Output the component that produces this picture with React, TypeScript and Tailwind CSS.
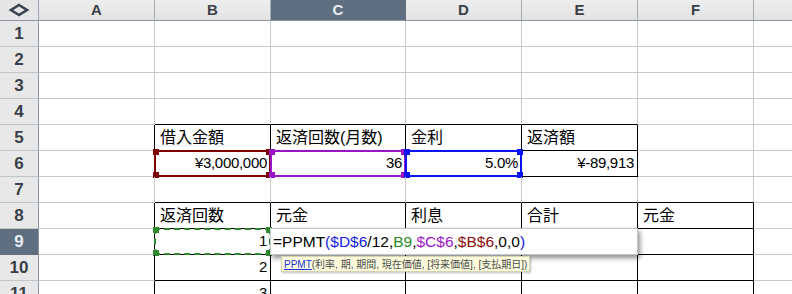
import React from "react";

const cols = ["A", "B", "C", "D", "E", "F", "G"];
const rows = [1, 2, 3, 4, 5, 6, 7, 8, 9, 10, 11];

type Cell = { text: string; num?: boolean };

const data: Record<string, Cell> = {
    B5: { text: "借入金額" },
    C5: { text: "返済回数(月数)" },
    D5: { text: "金利" },
    E5: { text: "返済額" },
    B6: { text: "¥3,000,000", num: true },
    C6: { text: "36", num: true },
    D6: { text: "5.0%", num: true },
    E6: { text: "¥-89,913", num: true },
    B8: { text: "返済回数" },
    C8: { text: "元金" },
    D8: { text: "利息" },
    E8: { text: "合計" },
    F8: { text: "元金" },
    B9: { text: "1", num: true },
    B10: { text: "2", num: true },
    B11: { text: "3", num: true },
};

// range highlights shown while the formula is edited
const refs: Record<string, { border: string; handle: string }> = {
    B6: { border: "border-[#7d0000]", handle: "bg-[#7d0000]" },
    C6: { border: "border-[#9a16c4]", handle: "bg-[#9a16c4]" },
    D6: { border: "border-[#0a14f0]", handle: "bg-[#0a14f0]" },
    B9: { border: "border-[#2f8a2f] border-dashed", handle: "bg-[#2f8a2f]" },
};

const boxed = (c: number, r: number) =>
    (r >= 5 && r <= 6 && c >= 1 && c <= 4) || (r >= 8 && c >= 1 && c <= 5);

const Handles = ({ color }: { color: string }) => (
    <>
        <span className={`absolute -left-[3px] -top-[3px] h-[6px] w-[6px] ${color}`} />
        <span className={`absolute -right-[3px] -top-[3px] h-[6px] w-[6px] ${color}`} />
        <span className={`absolute -left-[3px] -bottom-[3px] h-[6px] w-[6px] ${color}`} />
        <span className={`absolute -right-[3px] -bottom-[3px] h-[6px] w-[6px] ${color}`} />
    </>
);

const Corner = () => (
    <div className="flex items-center justify-center border-r border-b border-r-[#9aa5b1] border-b-[#8b97a3] bg-[#e6e6e6]">
        <svg width="22" height="14" viewBox="0 0 22 14">
            <path d="M11 2 L19 7 L11 12 L3 7 Z" fill="none" stroke="#3b4250" strokeWidth="2.6" strokeLinejoin="miter" />
        </svg>
    </div>
);

export default function App() {
    return (
        <div
            className="relative h-[294px] w-[792px] overflow-hidden bg-white"
            style={{ fontFamily: '"Liberation Sans", "Noto Sans CJK JP", sans-serif' }}
        >
            <div className="grid grid-cols-[39px_116px_116px_135px_116px_116px_116px_116px] grid-rows-[21px_repeat(11,26px)]">
                <Corner />
                {cols.map((c) => (
                    <div
                        key={c}
                        className={`flex items-center justify-center border-r border-b border-b-[#8b97a3] text-[15px] font-bold ${
                            c === "C"
                                ? "bg-[#5f6f80] text-[#e6edf3] border-r-[#5f6f80]"
                                : "bg-gradient-to-b from-[#eeeeee] to-[#e3e3e3] text-[#3b3f48] border-r-[#a3adb8]"
                        }`}
                    >
                        {c}
                    </div>
                ))}

                {rows.map((r) => (
                    <React.Fragment key={r}>
                        <div
                            className={`flex items-center justify-center border-r border-b border-r-[#8b97a3] text-[17px] font-bold ${
                                r === 9
                                    ? "bg-[#5f6f80] text-[#e6edf3] border-b-[#5f6f80]"
                                    : "bg-[#e8e8e8] text-[#3b3f48] border-b-[#c3c6c9]"
                            }`}
                        >
                            {r}
                        </div>
                        {cols.map((c, ci) => {
                            const key = `${c}${r}`;
                            const cell = data[key];
                            const ref = refs[key];
                            const rightBlack = boxed(ci, r) || boxed(ci + 1, r);
                            const bottomBlack = boxed(ci, r) || boxed(ci, r + 1);
                            return (
                                <div
                                    key={key}
                                    className={`relative flex items-center border-r border-b ${
                                        rightBlack ? "border-r-black" : "border-r-[#c9c9c9]"
                                    } ${bottomBlack ? "border-b-black" : "border-b-[#c9c9c9]"} ${
                                        cell?.num ? "justify-end pr-[3px] text-[15px] tracking-[-0.3px]" : "pl-[5px] text-[16px]"
                                    } text-black`}
                                >
                                    {cell && <span className="whitespace-nowrap">{cell.text}</span>}
                                    {ref && (
                                        <div className={`absolute -left-[1px] -top-[1px] -right-[1px] -bottom-[1px] border-2 ${ref.border}`}>
                                            <Handles color={ref.handle} />
                                        </div>
                                    )}
                                </div>
                            );
                        })}
                    </React.Fragment>
                ))}
            </div>

            {/* in-cell formula editor over C9 */}
            <div className="absolute left-[270px] top-[228px] flex h-[27px] w-[368px] items-center border border-[#bfc6cc] bg-white pl-[2px] text-[15.5px] shadow-[2px_3px_5px_rgba(0,0,0,0.45)]">
                <span className="whitespace-nowrap text-black">
                    =PPMT
                    <span className="text-[#1420e8]">($D$6</span>
                    /12,
                    <span className="text-[#2a8a2a]">B9</span>,
                    <span className="text-[#9a16c4]">$C$6</span>,
                    <span className="text-[#8a0a0a]">$B$6</span>
                    ,0,0
                    <span className="text-[#1420e8]">)</span>
                </span>
            </div>

            {/* function hint */}
            <div className="absolute left-[281px] top-[256px] flex h-[16px] items-center border border-[#d4d4b4] bg-[#fbfbdc] px-[2px] text-[10px] text-[#4d4d4d] shadow-[1px_1px_2px_rgba(0,0,0,0.25)]">
                <span className="whitespace-nowrap">
                    <span className="text-[#2233dd] underline">PPMT</span>(利率, 期, 期間, 現在価値, [将来価値], [支払期日])
                </span>
            </div>
        </div>
    );
}
